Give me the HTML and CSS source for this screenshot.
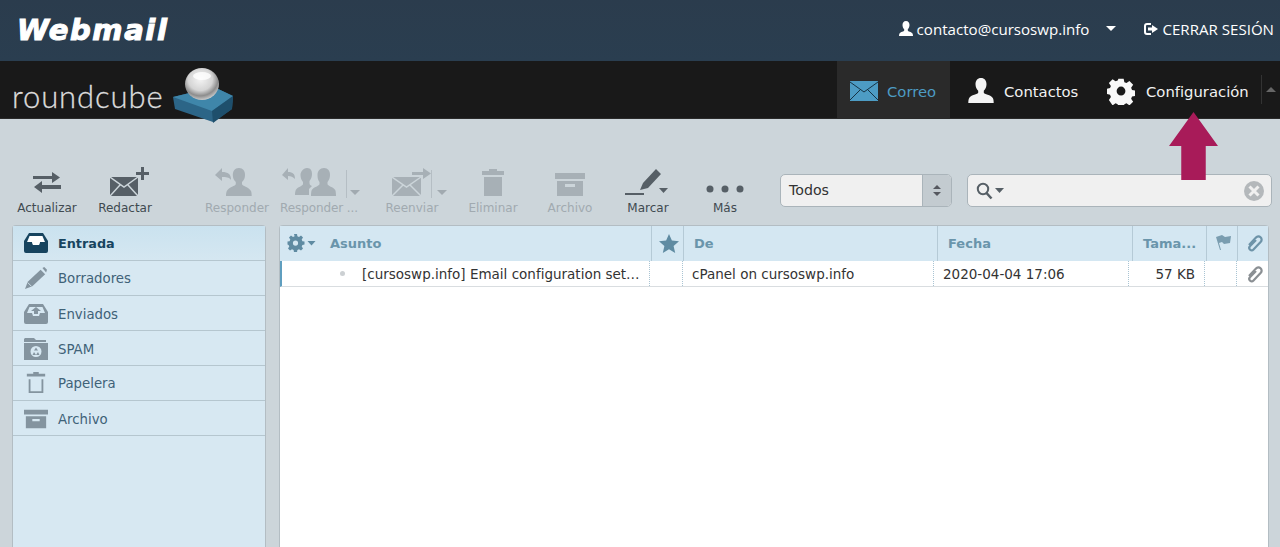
FILE: index.html
```html
<!DOCTYPE html>
<html lang="es">
<head>
<meta charset="utf-8">
<title>Webmail</title>
<link rel="stylesheet" href="styles.css">
</head>
<body>
<header class="topbar">
  <div class="webmail">Webmail</div>
  <div class="account">
    <svg class="ic-user" viewBox="0 0 16 16"><path d="M8 0c2.300 0 3.500 1.700 3.500 4 0 1.800-.8 3.300-1.700 4.200v1.300c0 1 3.700 1.300 4.700 3 .4.700.5 1.500.5 2.500H1c0-1 .1-1.800.5-2.500 1-1.700 4.700-2 4.700-3V8.200C5.300 7.300 4.500 5.800 4.500 4 4.500 1.700 5.700 0 8 0z"/></svg>
    <span class="email">contacto@cursoswp.info</span>
    <span class="caret-down"></span>
  </div>
  <div class="logout">
    <svg class="ic-logout" viewBox="0 0 16 16"><path d="M8 2H4a3 3 0 0 0-3 3v6a3 3 0 0 0 3 3h4v-2H4a1 1 0 0 1-1-1V5a1 1 0 0 1 1-1h4z"/><path d="M9 4l6 4-6 4V9.500H5v-3h4z"/></svg>
    <span>CERRAR SESIÓN</span>
  </div>
</header>

<nav class="navbar">
  <div class="brand">
    <span class="roundcube">roundcube</span>
    <svg class="cube" viewBox="0 0 62 58">
      <defs>
        <radialGradient id="ball" cx="45%" cy="35%" r="65%"><stop offset="0" stop-color="#f4f4f4"/><stop offset=".55" stop-color="#d4d4d4"/><stop offset=".8" stop-color="#8d8d8d"/><stop offset="1" stop-color="#c9c9c9"/></radialGradient>
      </defs>
      <path d="M1 30 L42 20 L61 29 L60 42 L41 55 L3 42z" fill="#2c6587"/>
      <path d="M1 30 L40 44 L61 29 L42 20z" fill="#3f86aa"/>
      <path d="M40 44 L61 29 L60 42 L41 56z" fill="#1e4f6c"/>
      <ellipse cx="30" cy="17" rx="17" ry="16" fill="url(#ball)"/>
      <ellipse cx="30" cy="9" rx="9" ry="4" fill="#fff" opacity=".8"/>
    </svg>
  </div>
  <div class="tabs">
    <a class="tab tab-mail">
      <svg class="ic-mail" viewBox="0 0 28 20"><rect width="28" height="20" fill="#4d9cc4"/><path d="M0 1l14 10L28 1M0 19l10-10M28 19L18 9" fill="none" stroke="#163344" stroke-width="1"/></svg>
      <span>Correo</span>
    </a>
    <a class="tab tab-contacts">
      <svg class="ic-contact" viewBox="0 0 26 26"><path d="M13 0c3.500 0 5.500 2.700 5.500 6.300 0 2.800-1.200 5-2.700 6.400v2.100c0 1.600 7.400 2.100 9 5.200.7 1.300.9 3.200.9 5H.3c0-1.800.2-3.700.9-5 1.600-3.100 9-3.600 9-5.200v-2.100C8.700 11.300 7.500 9.100 7.500 6.300 7.500 2.700 9.500 0 13 0z" fill="#f4f4f4"/></svg>
      <span>Contactos</span>
    </a>
    <a class="tab tab-settings">
      <svg class="ic-gear" viewBox="0 0 28 28"><path fill-rule="evenodd" fill="#f8f8f8" d="M11 0h6l.8 4 2.400 1 3.400-2.300 4.200 4.200-2.300 3.400 1 2.400 3.500.8v6l-3.500.8-1 2.400 2.300 3.400-4.200 4.200-3.400-2.300-2.400 1-.8 3.500h-6l-.8-3.500-2.400-1-3.400 2.300L.2 24.100l2.300-3.400-1-2.400L-2 17.500v-6l3.500-.8 1-2.400L.2 4.900 4.400.7l3.400 2.300 2.400-1zM14 9a5 5 0 1 0 0 10 5 5 0 0 0 0-10z" transform="translate(1.700 1.700) scale(.88)"/></svg>
      <span>Configuración</span>
    </a>
    <div class="nav-end"><span class="caret-up"></span></div>
  </div>
</nav>

<div class="arrow"></div>

<section class="toolbar">
  <div class="btn b-refresh">
    <svg viewBox="0 0 28 22"><path d="M0 5h19V1l8 5.500-8 5.500V8H0z M28 14H9v-4l-8 6 8 6v-4h19z" fill="#565f66"/></svg>
    <span>Actualizar</span>
  </div>
  <div class="btn b-compose">
    <svg viewBox="0 0 40 29"><path d="M0 10h28v19H0z" fill="#565f66"/><path d="M0 10l14 10 14-10M0 29l10-11M28 29L18 18" fill="none" stroke="#ccd5da" stroke-width="1.500"/><path d="M31 0h3v5h5v3h-5v5h-3V8h-5V5h5z" fill="#565f66"/></svg>
    <span>Redactar</span>
  </div>
  <div class="btn off b-reply">
    <svg viewBox="0 0 40 28"><g fill="#a7b0b6"><path d="M0 7l7-7v4c6 0 9 2 9 8-2-3-5-3-9-3v4z"/><path d="M24 0c4 0 6 3 6 7 0 3-1 5-3 7v2c0 2 7 3 9 7 .5 1 .7 3 .7 5H11c0-2 .3-4 .8-5 2-4 9-5 9-7v-2c-2-2-3-4-3-7 0-4 2-7 6-7z"/></g></svg>
    <span>Responder</span>
  </div>
  <div class="btn off b-replyall">
    <svg viewBox="0 0 56 28"><g fill="#a7b0b6"><path d="M0 7l6-7v4c5 0 7 2 7 7-2-2-4-3-7-3v4z"/><path d="M25 0c4 0 5 3 5 6 0 3-1 5-2.500 7v2c0 2 1 2 2.500 3l-3 3v6H13c0-2 .3-4 .8-5 1.500-3 7.200-4 7.200-6v-2c-1.500-2-2.500-4-2.500-7 0-3 2.500-7 6.500-7z"/><path d="M42 0c4 0 6 3 6 7 0 3-1 5-2.500 7v2c0 2 6 3 7.700 6 .6 1 .8 4 .8 6H29c0-2 .2-5 .8-6 1.700-3 7.700-4 7.700-6v-2C36 12 35.500 10 35.500 7c0-4 2.500-7 6.500-7z"/></g></svg>
    <span>Responder ...</span>
    <i class="split"></i><i class="mini"></i>
  </div>
  <div class="btn off b-forward">
    <svg viewBox="0 0 40 28"><path d="M0 9h29v19H0z" fill="#a7b0b6"/><path d="M0 9l14.500 10L29 9M0 28l11-11M29 28L18 17" fill="none" stroke="#ccd5da" stroke-width="1.500"/><path d="M20 4h11V0l8 5.500L31 11V7H20z" fill="#a7b0b6"/></svg>
    <span>Reenviar</span>
    <i class="split"></i><i class="mini"></i>
  </div>
  <div class="btn off b-delete">
    <svg viewBox="0 0 24 28"><path d="M8 3V1h8v2h7v4H1V3zM3 9h18v19H3z" fill="#a7b0b6"/></svg>
    <span>Eliminar</span>
  </div>
  <div class="btn off b-archive">
    <svg viewBox="0 0 30 23"><path fill-rule="evenodd" d="M0 0h30v6H0zM2 8h26v15H2zM10 11v3h10v-3z" fill="#a7b0b6"/></svg>
    <span>Archivo</span>
  </div>
  <div class="btn b-mark">
    <svg viewBox="0 0 48 28"><path d="M1 25h19v2H1z" fill="#565f66"/><path d="M16 22l3-7L32 1l5 5-13 14zM16 22l8-2" fill="#565f66"/><path d="M35 20h9l-4.500 5z" fill="#565f66"/></svg>
    <span>Marcar</span>
  </div>
  <div class="btn b-more">
    <svg viewBox="0 0 38 28"><g fill="#565f66"><circle cx="4" cy="21" r="3.500"/><circle cx="19" cy="21" r="3.500"/><circle cx="34" cy="21" r="3.500"/></g></svg>
    <span>Más</span>
  </div>
  <div class="select">
    <span class="select-val">Todos</span>
    <span class="select-btn"><i class="sel-up"></i><i class="sel-down"></i></span>
  </div>
  <div class="search">
    <svg class="ic-search" viewBox="0 0 28 18"><circle cx="7" cy="7" r="5.200" fill="none" stroke="#565f66" stroke-width="2"/><path d="M10.500 11l5 5.500" stroke="#565f66" stroke-width="2.500"/><path d="M19 6h9l-4.500 5z" fill="#565f66"/></svg>
    <svg class="ic-clear" viewBox="0 0 20 20"><circle cx="10" cy="10" r="10" fill="#b4b8bb"/><path d="M5.500 5.500l9 9M14.500 5.500l-9 9" stroke="#f0f0f0" stroke-width="3"/></svg>
  </div>
</section>

<main class="content">
  <aside class="folders">
    <div class="folder active">
      <svg viewBox="0 0 24 20"><path fill-rule="evenodd" fill="#17445f" d="M5 0h14l5 8v10a2 2 0 0 1-2 2H2a2 2 0 0 1-2-2V8zM5.500 3L3 9h5l1 3h6l1-3h5l-2.500-6z"/><path fill="#fff" d="M6 3h12l2.500 6H16l-1 3H9L8 9H3.500z"/></svg>
      <span>Entrada</span>
    </div>
    <div class="folder">
      <svg viewBox="0 0 24 24"><path d="M0 24l3-8L17 3l5 5L8 21z" fill="#84949f"/><path d="M19 1l2-1 3 3-1 3z" fill="#84949f"/><path d="M3 17l4 4" stroke="#d4e7f0" stroke-width="1"/></svg>
      <span>Borradores</span>
    </div>
    <div class="folder">
      <svg viewBox="0 0 24 20"><path fill-rule="evenodd" fill="#84949f" d="M5 0h14l5 8v10a2 2 0 0 1-2 2H2a2 2 0 0 1-2-2V8zM5.500 3L3 9h5l1 3h6l1-3h5l-2.500-6z"/><path fill="#84949f" d="M12 3l5 4h-3v3h-4V7H7z"/></svg>
      <span>Enviados</span>
    </div>
    <div class="folder">
      <svg viewBox="0 0 24 22"><path fill-rule="evenodd" fill="#84949f" d="M1 0h9l2 2h10v2H0V1zM0 5h24v17H0zM12 8a5.500 5.500 0 1 0 0 11 5.500 5.500 0 0 0 0-11z"/><path d="M12 9.500l2 3h-4zM8.500 17l1.500-3 2 3zM15.500 17L14 14l-2 3z" fill="#84949f"/></svg>
      <span>SPAM</span>
    </div>
    <div class="folder">
      <svg class="ic-narrow" viewBox="0 0 20 24"><path d="M7 2V0h6v2h7v3H0V2z" fill="#84949f"/><path d="M3 8v14h14V8" fill="none" stroke="#84949f" stroke-width="2"/></svg>
      <span>Papelera</span>
    </div>
    <div class="folder">
      <svg viewBox="0 0 26 20"><path fill-rule="evenodd" d="M0 0h26v5H0zM2 7h22v13H2zM9 10v2.500h8V10z" fill="#84949f"/></svg>
      <span>Archivo</span>
    </div>
  </aside>

  <section class="messages">
    <div class="list-head">
      <div class="col c-subject">
        <svg class="ic-listgear" viewBox="0 0 28 18"><path fill-rule="evenodd" fill="#5f8ba2" d="M6.500 0h3l.4 2.200 1.600.7 2-1.300 2 2-1.300 2 .7 1.600 2.100.4v3l-2.100.4-.7 1.600 1.300 2-2 2-2-1.300-1.600.7-.4 2.200h-3l-.4-2.200-1.600-.7-2 1.300-2-2 1.300-2-.7-1.600L0 10.600v-3l2.100-.4.700-1.600-1.300-2 2-2 2 1.300 1.600-.7zM8 6.500a2.600 2.600 0 1 0 0 5.200 2.600 2.600 0 0 0 0-5.200z"/><path fill="#5f8ba2" d="M20 7h8l-4 4.500z"/></svg>
        <span>Asunto</span>
      </div>
      <div class="col c-star"><svg viewBox="0 0 20 19"><path d="M10 0l2.900 6.500 7.100.7-5.400 4.700L16.200 19 10 15.300 3.800 19l1.600-7.100L0 7.200l7.100-.7z" fill="#5f8ba2"/></svg></div>
      <div class="col c-from">De</div>
      <div class="col c-date">Fecha</div>
      <div class="col c-size">Tama...</div>
      <div class="col c-flag"><svg viewBox="0 0 16 16"><path d="M0 2l6-2 3 2 6-1-1 7-6 1-2-2-3 1 2 7H4z" fill="#7a9db0"/></svg></div>
      <div class="col c-att"><svg viewBox="0 0 20 20"><path d="M4 12l7-7.500a3.200 3.200 0 0 1 4.800 4.300L8.500 16.500a2.400 2.400 0 0 1-3.600-3.200L11 7" fill="none" stroke="#6d93a8" stroke-width="2.200"/></svg></div>
    </div>
    <div class="msg">
      <div class="cell m-subject"><i class="dot"></i><span class="subject">[cursoswp.info] Email configuration set…</span></div>
      <div class="cell m-star"></div>
      <div class="cell m-from">cPanel on cursoswp.info</div>
      <div class="cell m-date">2020-04-04 17:06</div>
      <div class="cell m-size">57 KB</div>
      <div class="cell m-flag"></div>
      <div class="cell m-att"><svg viewBox="0 0 20 20"><path d="M4 12l7-7.500a3.200 3.200 0 0 1 4.800 4.300L8.500 16.500a2.400 2.400 0 0 1-3.600-3.200L11 7" fill="none" stroke="#8a8f93" stroke-width="2.200"/></svg></div>
    </div>
  </section>
</main>
</body>
</html>
```
FILE: styles.css
```css
* { box-sizing: border-box; }
html, body { margin: 0; height: 100%; overflow: hidden; }
body {
  width: 1280px;
  height: 547px;
  position: relative;
  background: #ccd5da;
  font-family: "DejaVu Sans", sans-serif;
  color: #333;
}

/* top bar */
.topbar {
  height: 61px;
  background: linear-gradient(#2b3c4d, #2a3e50);
  display: flex;
  align-items: center;
  color: #fff;
  padding: 0 6px 4px 17px;
  font-size: 14px;
}
.webmail {
  font-family: "DejaVu Sans", sans-serif;
  font-weight: 700;
  font-style: italic;
  font-size: 29px;
  letter-spacing: 1.600px;
  -webkit-text-stroke: 1.100px #fff;
  margin-right: auto;
  line-height: 1;
  margin-top: 3px;
}
.account { display: flex; align-items: center; }
.ic-user { width: 16px; height: 16px; fill: #fff; margin-right: 3px; }
.email { font-family: "Open Sans", sans-serif; font-size: 15.100px; }
.caret-down {
  border: 5px solid transparent;
  border-top-color: #fff;
  border-bottom: 0;
  margin-left: 17px;
}
.logout { display: flex; align-items: center; margin-left: 27px; font-family: "Open Sans", sans-serif; font-size: 15.100px; }
.ic-logout { width: 16px; height: 16px; fill: #fff; margin-right: 3px; }

/* nav */
.navbar {
  height: 58px;
  background: #191919;
  display: flex;
  justify-content: space-between;
  border-bottom: 1px solid #2a2a2a;
}
.brand { display: flex; align-items: flex-start; padding: 20px 0 0 12px; }
.roundcube {
  font-family: "Lato", sans-serif;
  font-weight: 300;
  font-size: 31px;
  line-height: 30px;
  letter-spacing: .900px;
  -webkit-text-stroke: .3px #dcdcdc;
  color: #dcdcdc;
}
.cube { width: 62px; height: 58px; margin: -14px 0 0 8px; }
.tabs { display: flex; align-items: stretch; font-size: 14.800px; color: #f2f2f2; }
.tab { display: flex; align-items: center; padding-top: 3px; }
.tab-mail { width: 113px; background: #2a2a2a; padding-left: 13px; color: #4d9cc4; }
.ic-mail { width: 28px; height: 20px; margin-right: 9px; }
.tab-contacts { padding-left: 18px; width: 144px; }
.ic-contact { width: 26px; height: 26px; margin-right: 10px; }
.tab-settings { width: 167px; padding-left: 13px; }
.ic-gear { width: 28px; height: 28px; margin-right: 11px; }
.nav-end { width: 19px; display: flex; align-items: center; justify-content: center; border-left: 1px solid #333; margin: 14px 0; }
.caret-up { border: 5px solid transparent; border-bottom-color: #666; border-top: 0; }

/* arrow */
.arrow {
  position: absolute;
  left: 1169px;
  top: 112px;
  width: 49px;
  height: 68px;
  background: #a81b59;
  clip-path: polygon(50% 0, 100% 50%, 75% 50%, 75% 100%, 25% 100%, 25% 50%, 0 50%);
}

/* toolbar */
.toolbar {
  height: 106px;
  display: flex;
  align-items: flex-start;
  padding: 49px 8px 0 8px;
  font-size: 12px;
}
.btn {
  position: relative;
  display: flex;
  flex-direction: column;
  align-items: center;
  color: #3f4a50;
  white-space: nowrap;
  flex: none;
}
.btn svg { height: 28px; width: auto; margin-bottom: 4px; display: block; }
.btn span { font-size: 12px; line-height: 16px; }
.btn.off { color: #a1aab0; }
.b-refresh { width: 78px; }
.b-refresh svg { height: 22px; margin: 3px 0 7px; }
.b-compose { width: 78px; }
.b-compose svg { height: 29px; margin: -1px 0 4px 10px; }
.b-reply { width: 62px; margin-left: 42px; }
.b-reply svg { margin-right: 4px; }
.b-replyall { width: 70px; margin-left: 10px; }
.b-replyall svg { margin-right: 6px; }
.b-replyall span { margin-left: 12px; letter-spacing: -.1px; }
.b-forward { width: 60px; margin-left: 34px; }
.b-delete { width: 60px; margin-left: 21px; }
.b-archive { width: 60px; margin-left: 17px; }
.b-archive svg { height: 23px; margin: 5px 0 4px; }
.b-mark { width: 60px; margin-left: 18px; }
.b-more { width: 60px; margin-left: 17px; }
.split { position: absolute; right: 1px; top: 2px; height: 28px; border-left: 1px solid #b5bec4; }
.mini { position: absolute; right: -12px; top: 22px; border: 5px solid transparent; border-top-color: #a1aab0; border-bottom: 0; }
.b-forward .split { right: 10px; }
.b-forward .mini { right: -5px; }

.select {
  width: 172px;
  height: 33px;
  margin-left: 25px;
  margin-top: 6px;
  border: 1px solid #aab4ba;
  border-radius: 5px;
  background: #f0f0f0;
  display: flex;
  align-items: center;
  justify-content: space-between;
  overflow: hidden;
  font-size: 14.200px;
  color: #333;
  padding-left: 8px;
}
.select-val { margin-top: -2px; }
.select-btn {
  width: 29px;
  height: 100%;
  background: #c3cbd0;
  border-left: 1px solid #aab4ba;
  display: flex;
  flex-direction: column;
  gap: 3px;
  align-items: center;
  justify-content: center;
}
.sel-up { border: 4px solid transparent; border-bottom-color: #55585f; border-top: 0; }
.sel-down { border: 4px solid transparent; border-top-color: #55585f; border-bottom: 0; }
.search {
  width: 305px;
  height: 33px;
  margin-left: 15px;
  margin-top: 6px;
  border: 1px solid #aab4ba;
  border-radius: 5px;
  background: #f0f0f0;
  display: flex;
  align-items: center;
  justify-content: space-between;
  padding: 0 7px 0 8px;
}
.ic-search { width: 28px; height: 18px; }
.ic-clear { width: 20px; height: 20px; }

/* content */
.content { display: flex; align-items: stretch; padding: 0 8px 0 12px; height: 322px; }
.folders {
  width: 254px;
  background: #d7e8f2;
  border: 1px solid #b3bdc3;
  border-bottom: 0;
  border-radius: 4px 4px 0 0;
  flex: none;
}
.folder {
  height: 35px;
  display: flex;
  align-items: center;
  border-bottom: 1px solid #b5c6cf;
  padding-left: 11px;
  font-size: 13.300px;
  color: #3f6278;
}
.folder:nth-child(3), .folder:nth-child(4), .folder:nth-child(6) { padding-top: 2px; }
.folder svg { width: 24px; height: 22px; margin-right: 10px; flex: none; }
.folder.active { background: linear-gradient(#cae2ef, #d5e7f1); color: #17445f; font-weight: 700; font-size: 12.800px; }

.messages {
  width: 990px;
  margin-left: 13px;
  background: #fff;
  border: 1px solid #b3bdc3;
  border-bottom: 0;
  border-radius: 4px 4px 0 0;
  flex: none;
}
.list-head {
  height: 35px;
  background: #d4e7f2;
  display: grid;
  grid-template-columns: 372px 32px 254px 195px 74px 31px 30px;
  font-size: 13px;
  color: #6a95ab;
  font-weight: 700;
}
.col { display: flex; align-items: center; border-right: 1px solid #b5cad6; padding: 0 0 1px 10px; white-space: nowrap; overflow: hidden; }
.col:last-child { border-right: 0; }
.col svg { flex: none; }
.c-subject { padding-left: 6px; }
.ic-listgear { width: 31px; height: 18px; margin-right: 13px; }
.c-star, .c-flag, .c-att { padding-left: 0; justify-content: center; }
.c-star svg { width: 20px; height: 19px; margin-left: 3px; }
.c-flag svg { width: 16px; height: 16px; margin-left: 4px; }
.c-att svg { width: 20px; height: 20px; margin-left: 3px; }
.msg {
  height: 26px;
  display: grid;
  grid-template-columns: 368px 33px 251px 195px 76px 32px 32px;
  border-bottom: 1px solid #d9dde0;
  border-left: 2px solid #5f9ebf;
  font-size: 13.500px;
  color: #333;
}
.cell { display: flex; align-items: center; border-right: 1px dotted #a9c4d3; padding-left: 9px; white-space: nowrap; overflow: hidden; }
.cell:last-child { border-right: 0; }
.m-subject { padding-left: 58px; }
.dot { width: 5px; height: 5px; border-radius: 50%; background: #ccd0d3; margin-right: 17px; flex: none; }
.m-size { justify-content: flex-end; padding-right: 9px; }
.m-att { padding-left: 8px; }
.m-att svg { width: 20px; height: 20px; flex: none; }
```
